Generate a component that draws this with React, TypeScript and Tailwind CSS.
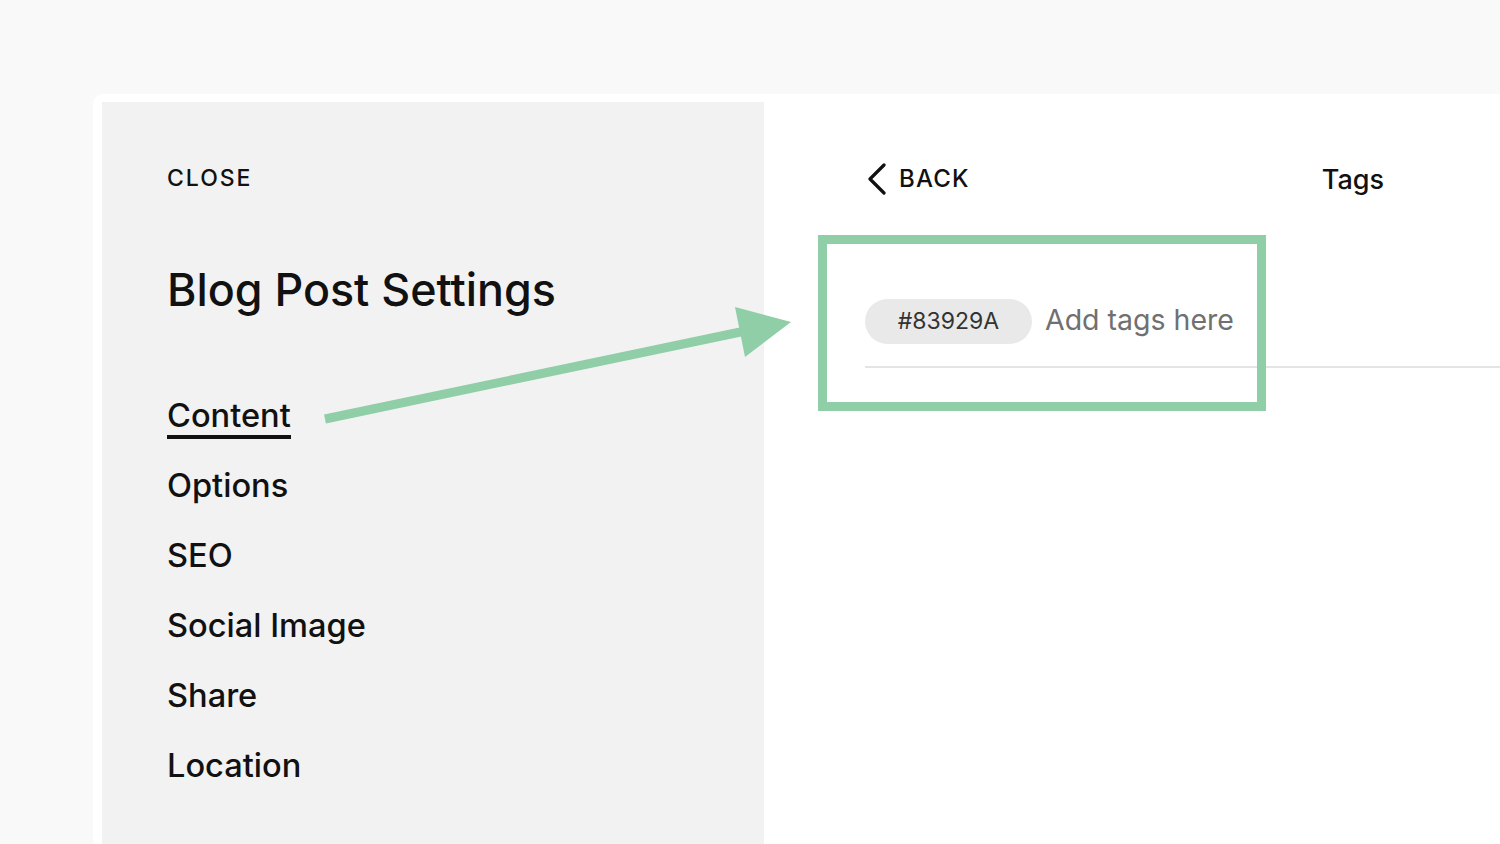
import React from "react";

const navItems = ["Content", "Options", "SEO", "Social Image", "Share", "Location"];

function ChevronLeft() {
  return (
    <svg width="22" height="32" viewBox="0 0 22 32" fill="none" className="shrink-0">
      <path d="M19 2 L5 16 L19 30" stroke="#111" strokeWidth="3.2" strokeLinecap="round" strokeLinejoin="round" />
    </svg>
  );
}

export default function App() {
  return (
    <div
      className="relative h-[844px] w-full overflow-hidden bg-[#f9f9f9] pl-[93px] pt-[94px]"
      style={{ fontFamily: "Inter, 'Liberation Sans', sans-serif" }}
    >
      <div className="flex h-full rounded-tl-[10px] bg-white pl-[9px] pt-[8px]">
        {/* left settings panel */}
        <aside className="flex h-full w-[662px] shrink-0 flex-col bg-[#f2f2f2] pl-[65px] pt-[65px]">
          <div className="text-[23px] font-medium leading-none tracking-[0.085em] text-[#111]">CLOSE</div>
          <h1 className="mt-[78px] text-[44.8px] font-medium leading-none text-[#111]">
            Blog Post Settings
          </h1>
          <nav className="mt-[84px] flex flex-col gap-[34px]">
            {navItems.map((item, i) => (
              <div key={item} className="flex">
                <span
                  className={[
                    "text-[32.6px] font-medium leading-[36px] text-[#111]",
                    i === 0 ? "border-b-[4px] border-[#111] pb-[2px] -mb-[6px]" : "",
                  ].join(" ")}
                >
                  {item}
                </span>
              </div>
            ))}
          </nav>
        </aside>

        {/* right tags panel */}
        <section className="flex-1 pl-[101px] pt-[61px]">
          <div className="flex items-center justify-between pr-[116px]">
            <div className="flex items-center gap-[12px]">
              <ChevronLeft />
              <span className="text-[24px] font-medium leading-none tracking-[0.05em] text-[#111]">BACK</span>
            </div>
            <span className="text-[27px] font-medium leading-none text-[#111]">Tags</span>
          </div>

          <div className="mt-[104px] flex items-center gap-[13px] border-b-2 border-[#e4e4e4] pb-[22px]">
            <span className="flex h-[45px] w-[167px] items-center justify-center rounded-full bg-[#e9e9e9] text-[23px] text-[#333]">
              #83929A
            </span>
            <span className="-mt-[2px] text-[28.5px] text-[#707070]">Add tags here</span>
          </div>
        </section>
      </div>

      {/* annotation overlay */}
      <div className="pointer-events-none absolute left-[818px] top-[235px] h-[176px] w-[448px] border-[9px] border-[#8fcea6]" />
      <svg className="pointer-events-none absolute left-0 top-0" width="1500" height="844">
        <line x1="325" y1="419" x2="750" y2="330" stroke="#8fcea6" strokeWidth="9" />
        <polygon points="735,307 791,322 745,357" fill="#8fcea6" />
      </svg>
    </div>
  );
}
